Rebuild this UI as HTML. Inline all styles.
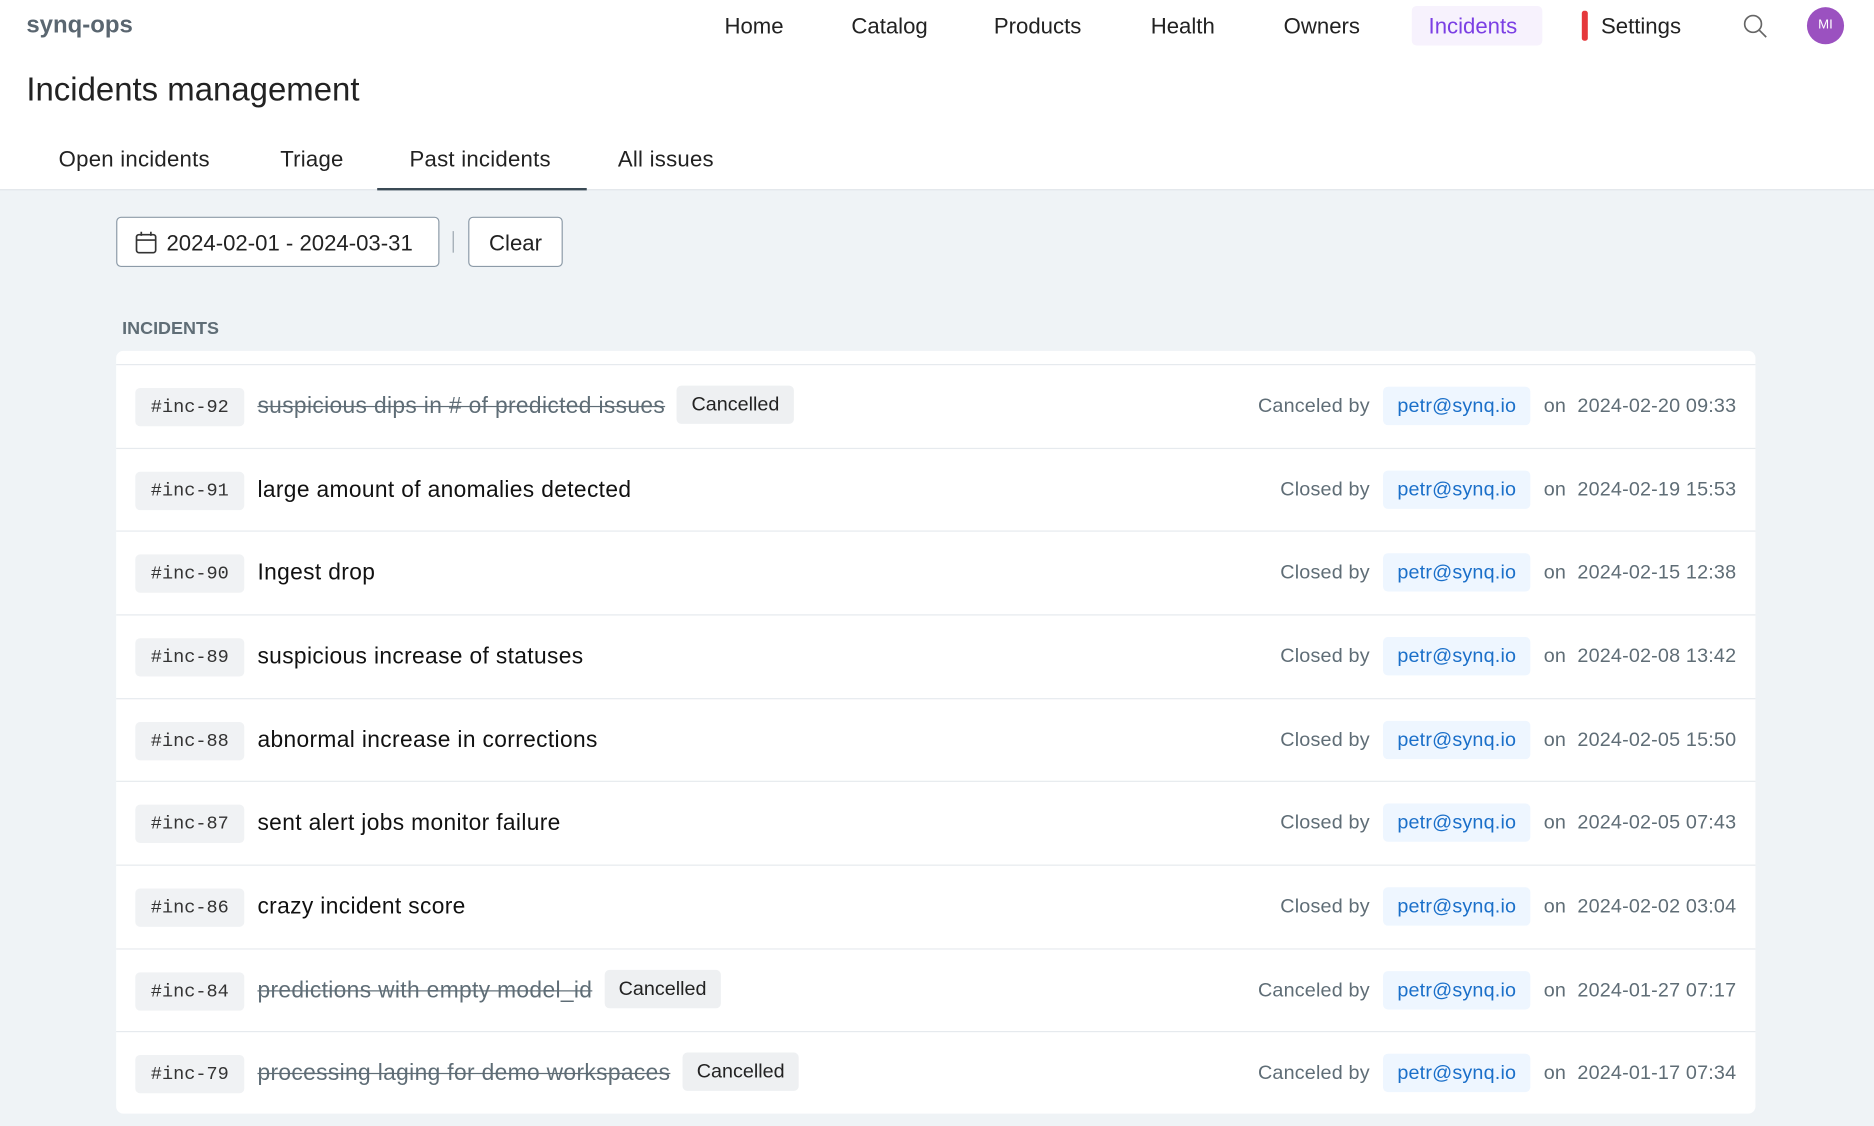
<!DOCTYPE html>
<html><head><meta charset="utf-8"><style>
html,body{margin:0;padding:0;width:1874px;height:1124px;overflow:hidden;background:#eff3f6}
#w{position:absolute;left:0;top:0;width:1565px;height:940px;transform:scale(1.19744);transform-origin:0 0;font-family:"Liberation Sans",sans-serif;color:#222}
.a{position:absolute;white-space:nowrap}
.hdr{position:absolute;left:0;top:0;width:1565px;height:158px;background:#fff;border-bottom:1px solid #dde3e8}
.nav{font-size:18.5px;top:11px;color:#222}
.tab{font-size:18.5px;top:122px;color:#222;letter-spacing:0.2px}
.btn{position:absolute;background:#fff;border:1px solid #8d9ba8;border-radius:4px;height:42px;top:181px;font-size:18.5px;line-height:42px;box-sizing:border-box}
.card{position:absolute;left:97px;top:293px;width:1369px;height:637px;background:#fff;border-radius:6px}
.row{position:absolute;left:0;width:1369px;height:69px;border-top:1px solid #e6eaee}
.id{position:absolute;left:16px;top:19px;height:32px;line-height:33px;width:91px;text-align:center;background:#f0f2f4;border-radius:4px;font-family:"Liberation Mono",monospace;font-size:15.5px;color:#333}
.t{position:absolute;left:118px;top:0;line-height:69px;font-size:19px;color:#111;letter-spacing:0.3px}
.t.c{color:#5f6d76;text-decoration:line-through}
.badge{display:inline-block;background:#eef0f2;border-radius:4px;height:32px;line-height:32px;padding:0 12px;font-size:16.5px;color:#222;text-decoration:none;margin-left:10px;vertical-align:middle;letter-spacing:0;position:relative;top:-2px}
.r{position:absolute;right:16px;top:0;line-height:69px;font-size:16.5px;color:#5f6d76;letter-spacing:0.15px}
.em{display:inline-block;background:#eef6ff;color:#1a6fc9;border-radius:4px;height:32px;line-height:32px;padding:0 12px;margin:0 11px;vertical-align:middle;position:relative;top:-1px}
</style></head><body><div id="w">
<div class="hdr"></div>
<div class="a" style="left:22px;top:10px;font-size:20px;font-weight:bold;color:#5a6670">synq-ops</div>
<div class="a nav" style="left:605px">Home</div>
<div class="a nav" style="left:711px">Catalog</div>
<div class="a nav" style="left:830px">Products</div>
<div class="a nav" style="left:961px">Health</div>
<div class="a nav" style="left:1072px">Owners</div>
<div class="a" style="left:1179px;top:5px;width:109px;height:33px;background:#f7f2fd;border-radius:4px"></div>
<div class="a nav" style="left:1193px;color:#7b3fe4">Incidents</div>
<div class="a" style="left:1321px;top:9px;width:5px;height:25px;background:#e5383b;border-radius:2px"></div>
<div class="a nav" style="left:1337px">Settings</div>
<svg class="a" style="left:1455px;top:11px" width="22" height="22" viewBox="0 0 22 22"><circle cx="9" cy="9" r="7" fill="none" stroke="#666" stroke-width="1.4"/><line x1="14" y1="14" x2="20" y2="20" stroke="#666" stroke-width="1.4"/></svg>
<div class="a" style="left:1509px;top:6px;width:31px;height:31px;border-radius:50%;background:#9b51c0;color:#fff;font-size:11px;text-align:center;line-height:31px">MI</div>
<div class="a" style="left:22px;top:59px;font-size:27.5px;color:#222">Incidents management</div>
<div class="a tab" style="left:49px">Open incidents</div>
<div class="a tab" style="left:234px">Triage</div>
<div class="a tab" style="left:342px">Past incidents</div>
<div class="a tab" style="left:516px">All issues</div>
<div class="a" style="left:315px;top:157px;width:175px;height:2px;background:#3a4a55"></div>
<div class="btn" style="left:97px;width:270px;padding-left:41px">2024-02-01 - 2024-03-31</div>
<svg class="a" style="left:113px;top:193px" width="18" height="19" viewBox="0 0 18 19"><rect x="1" y="3" width="16" height="15" rx="2" fill="none" stroke="#333" stroke-width="1.4"/><line x1="1" y1="7.5" x2="17" y2="7.5" stroke="#333" stroke-width="1.4"/><line x1="5" y1="0.5" x2="5" y2="4" stroke="#333" stroke-width="1.4"/><line x1="13" y1="0.5" x2="13" y2="4" stroke="#333" stroke-width="1.4"/></svg>
<div class="a" style="left:378px;top:193px;width:1px;height:18px;background:#9aa5ae"></div>
<div class="btn" style="left:391px;width:79px;text-align:center">Clear</div>
<div class="a" style="left:102px;top:266px;font-size:15px;font-weight:bold;color:#5f6d76">INCIDENTS</div>
<div class="card">
<div class="row" style="top:11px"><div class="id">#inc-92</div><div class="t c">suspicious dips in # of predicted issues<span class="badge">Cancelled</span></div><div class="r">Canceled by<span class="em">petr@synq.io</span>on &nbsp;2024-02-20 09:33</div></div>
<div class="row" style="top:81px"><div class="id">#inc-91</div><div class="t">large amount of anomalies detected</div><div class="r">Closed by<span class="em">petr@synq.io</span>on &nbsp;2024-02-19 15:53</div></div>
<div class="row" style="top:150px"><div class="id">#inc-90</div><div class="t">Ingest drop</div><div class="r">Closed by<span class="em">petr@synq.io</span>on &nbsp;2024-02-15 12:38</div></div>
<div class="row" style="top:220px"><div class="id">#inc-89</div><div class="t">suspicious increase of statuses</div><div class="r">Closed by<span class="em">petr@synq.io</span>on &nbsp;2024-02-08 13:42</div></div>
<div class="row" style="top:290px"><div class="id">#inc-88</div><div class="t">abnormal increase in corrections</div><div class="r">Closed by<span class="em">petr@synq.io</span>on &nbsp;2024-02-05 15:50</div></div>
<div class="row" style="top:359px"><div class="id">#inc-87</div><div class="t">sent alert jobs monitor failure</div><div class="r">Closed by<span class="em">petr@synq.io</span>on &nbsp;2024-02-05 07:43</div></div>
<div class="row" style="top:429px"><div class="id">#inc-86</div><div class="t">crazy incident score</div><div class="r">Closed by<span class="em">petr@synq.io</span>on &nbsp;2024-02-02 03:04</div></div>
<div class="row" style="top:499px"><div class="id">#inc-84</div><div class="t c">predictions with empty model_id<span class="badge">Cancelled</span></div><div class="r">Canceled by<span class="em">petr@synq.io</span>on &nbsp;2024-01-27 07:17</div></div>
<div class="row" style="top:568px"><div class="id">#inc-79</div><div class="t c">processing laging for demo workspaces<span class="badge">Cancelled</span></div><div class="r">Canceled by<span class="em">petr@synq.io</span>on &nbsp;2024-01-17 07:34</div></div>
</div>
</div></body></html>
